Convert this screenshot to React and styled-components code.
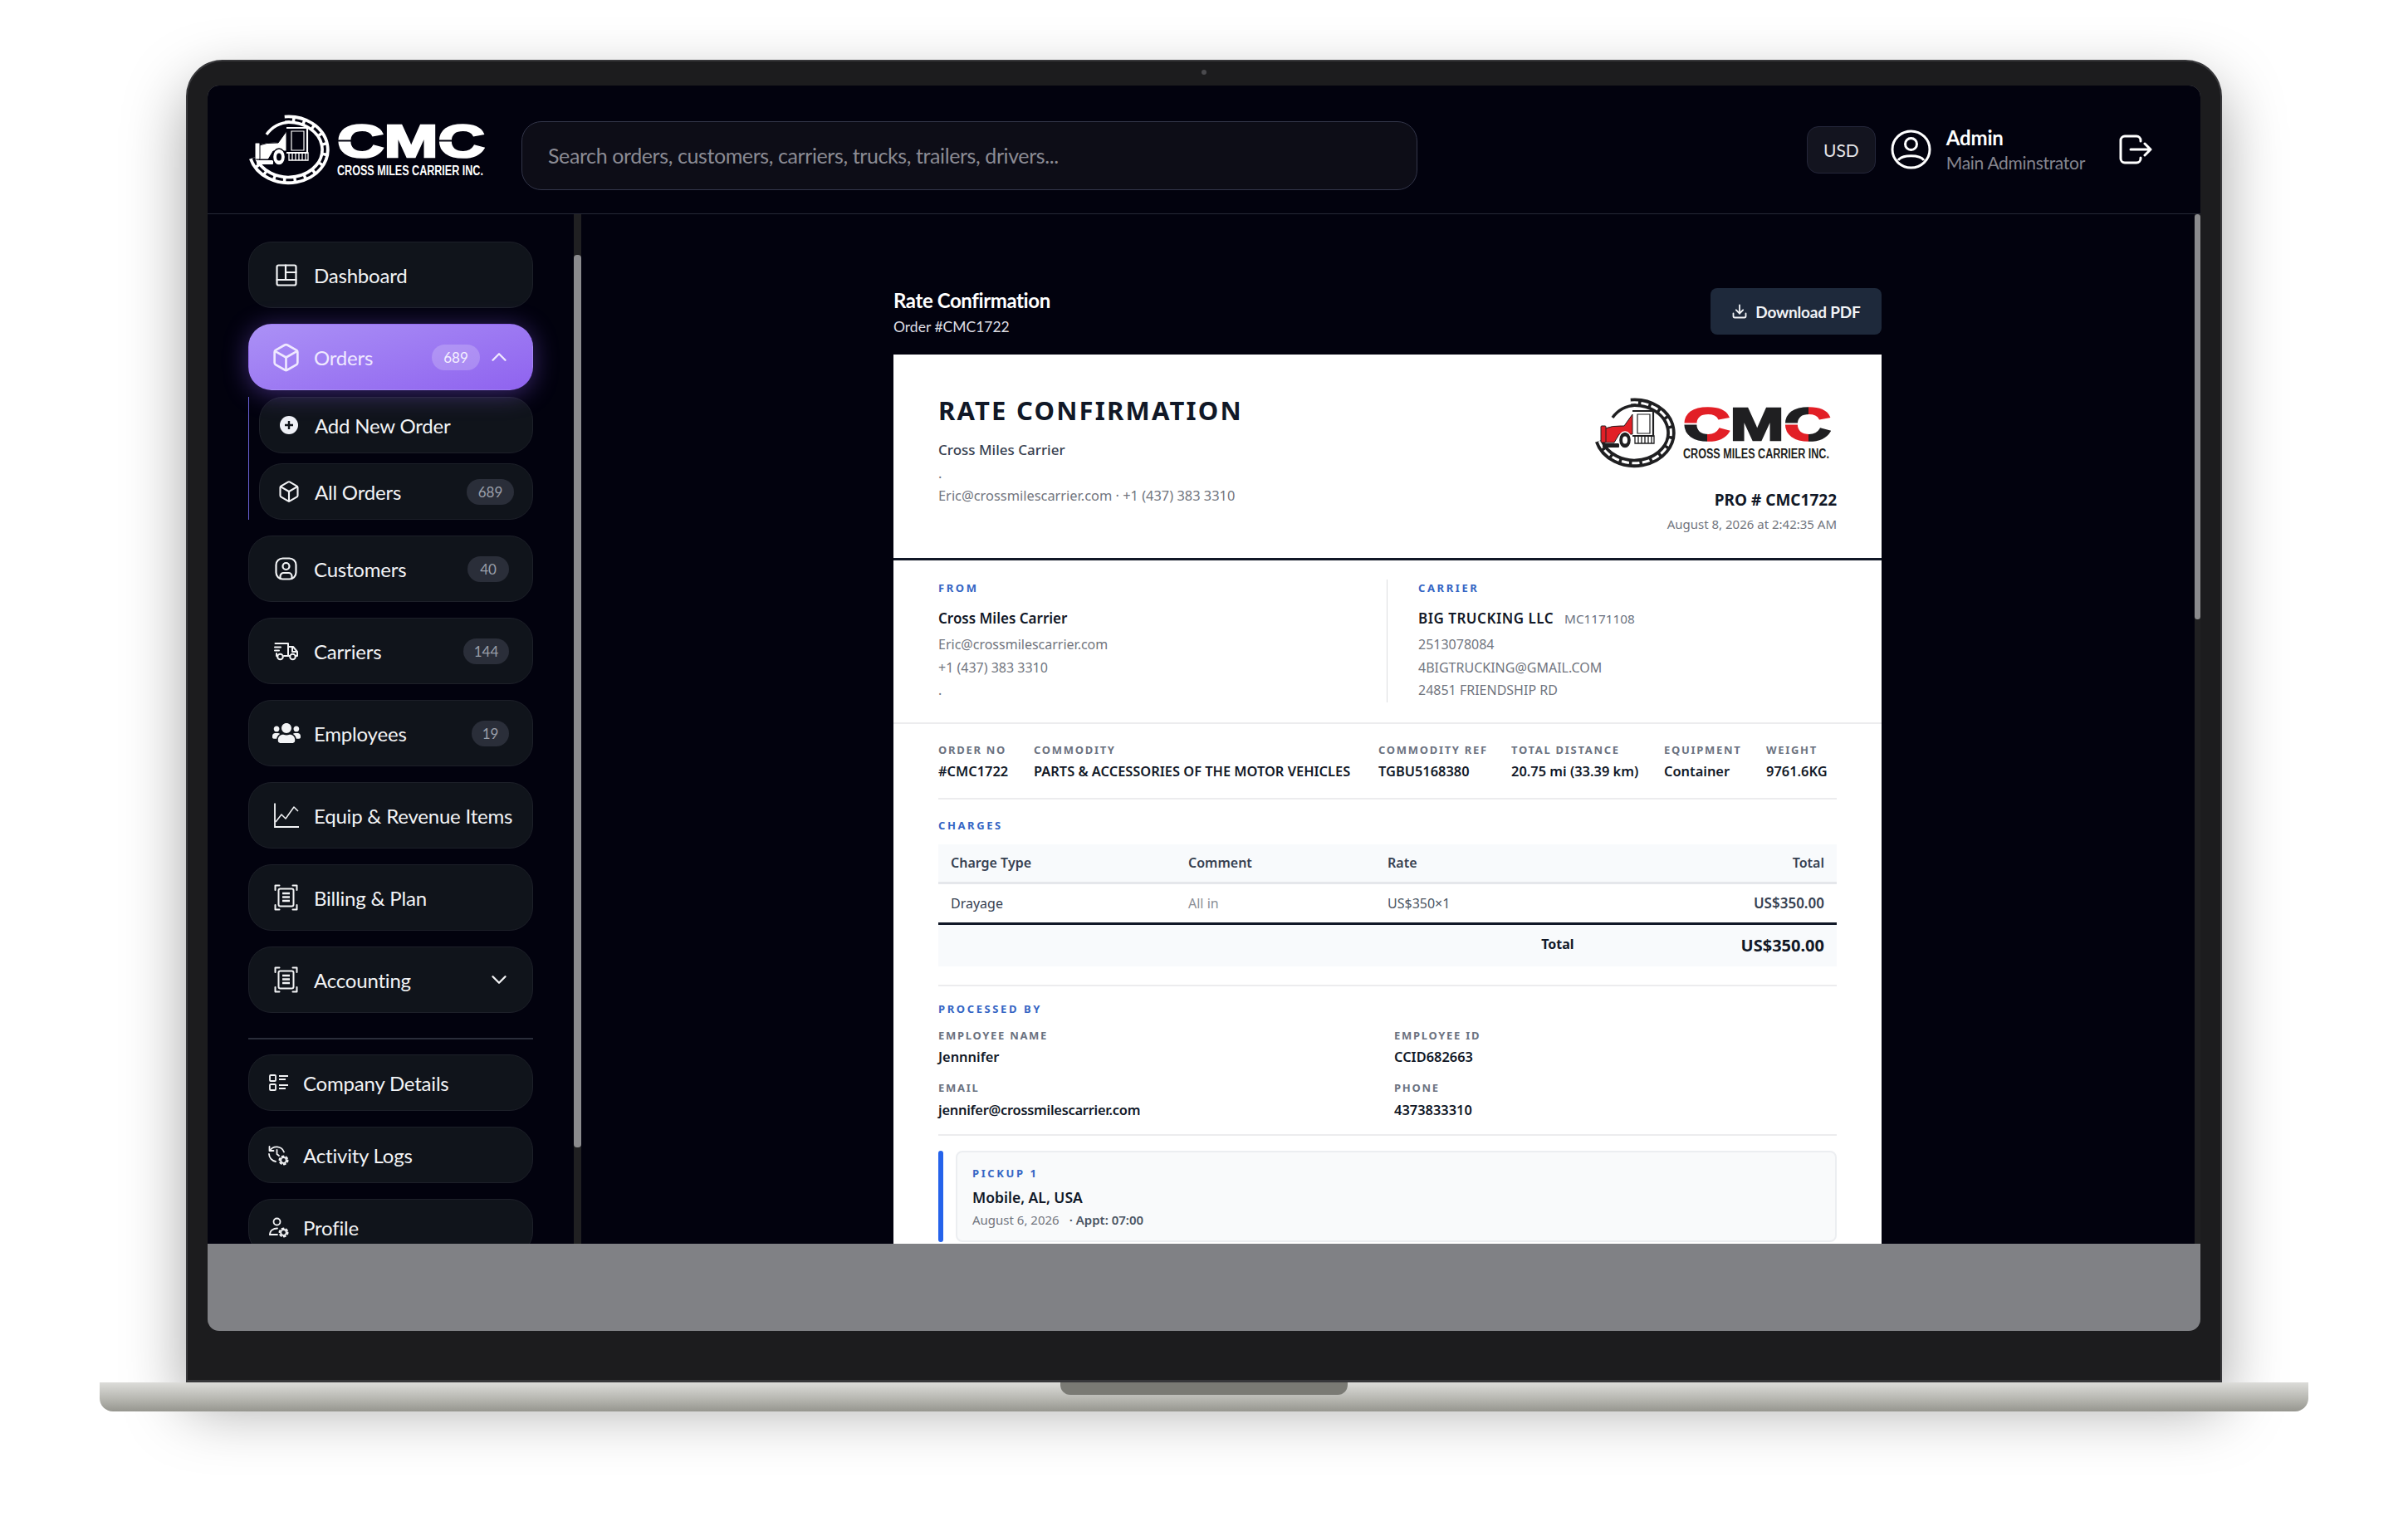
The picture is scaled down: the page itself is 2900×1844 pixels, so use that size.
import styled, { createGlobalStyle } from "styled-components"
import { Box, ChevronDown, ChevronUp, Download } from "lucide-react"
import { FaUsers } from "react-icons/fa"

const uiFont = `"Lato", "Noto Sans", sans-serif`
const docFont = `"Noto Sans", "Open Sans", sans-serif`

const colors = {
  ink: "#111827",
  muted: "#71757e",
  label: "#6b7280",
  blue: "#3565c4",
  rule: "#ececee",
  appBg: "#02020e",
  navBg: "#10141b",
  navBorder: "#1d2029",
}

const GlobalStyle = createGlobalStyle`
  html, body { margin: 0; background: #ffffff; }
  * { box-sizing: border-box; }
`

const Page = styled.div`
  width: 2900px;
  height: 1844px;
  padding-top: 72px;
  display: flex;
  flex-direction: column;
  align-items: center;
  overflow: hidden;
  background: #ffffff;
  font-family: ${uiFont};
`
const Lid = styled.div`
  position: relative;
  width: 2452px;
  height: 1593px;
  padding: 29px 26px 60px;
  border-radius: 44px 44px 0 0;
  background: #1c1c1e;
  border: 2px solid #37373a;
  border-bottom-width: 3px;
  box-shadow: 0 30px 75px rgba(0, 0, 0, 0.36);
`
const Camera = styled.span`
  position: absolute;
  top: 10px;
  left: 50%;
  width: 6px;
  height: 6px;
  margin-left: -3px;
  border-radius: 50%;
  background: #4a4a4e;
`
const Screen = styled.div`
  height: 1500px;
  margin: 0 -2px;
  border-radius: 14px;
  overflow: hidden;
  background: #808185;
`
const Shell = styled.div`
  height: 1395px;
  display: flex;
  flex-direction: column;
  background: ${colors.appBg};
`
const LaptopBase = styled.div`
  position: relative;
  width: 2660px;
  height: 35px;
  border-radius: 0 0 16px 16px;
  background: linear-gradient(#dcdcd9, #b8b8b2 55%, #96968f);
  box-shadow: 0 56px 50px -30px rgba(0, 0, 0, 0.34);
`
const BaseNotch = styled.span`
  position: absolute;
  top: 0;
  left: 50%;
  width: 346px;
  height: 15px;
  margin-left: -173px;
  border-radius: 0 0 12px 12px;
  background: #7a7a74;
`

/* top bar */
const TopBar = styled.header`
  height: 155px;
  flex-shrink: 0;
  display: flex;
  align-items: center;
  padding: 0 58px 0 49px;
  border-bottom: 1px solid #252836;
`
const SearchBox = styled.div`
  width: 1079px;
  height: 83px;
  margin: 14px 0 0 43px;
  padding-left: 31px;
  display: flex;
  align-items: center;
  border-radius: 24px;
  border: 1px solid #33364a;
  background: #0d0d17;
  color: #8b8b94;
  font-size: 25px;
  letter-spacing: -0.4px;
`
const TopActions = styled.div`
  margin-left: auto;
  display: flex;
  align-items: center;
`
const CurrencyButton = styled.div`
  width: 83px;
  height: 57px;
  display: flex;
  align-items: center;
  justify-content: center;
  border-radius: 14px;
  border: 1px solid #24263a;
  background: #13141f;
  color: #e4e4e8;
  font-size: 21px;
`
const AdminBlock = styled.div`
  margin-left: 18px;
  display: flex;
  align-items: center;
  gap: 18px;
  color: #ffffff;
`
const AdminText = styled.div`
  display: flex;
  flex-direction: column;
  gap: 3px;
`
const AdminName = styled.span`
  font-size: 24px;
  line-height: 27px;
  font-weight: 700;
  letter-spacing: -0.2px;
`
const AdminRole = styled.span`
  font-size: 21px;
  line-height: 27px;
  letter-spacing: -0.3px;
  color: #85858e;
`
const LogoutIcon = styled.svg`
  margin-left: 41px;
  display: block;
`

/* body */
const Body = styled.div`
  flex: 1;
  min-height: 0;
  display: flex;
  overflow: hidden;
`
const Sidebar = styled.nav`
  width: 441px;
  flex-shrink: 0;
  padding: 33px 49px 0;
  display: flex;
  flex-direction: column;
  gap: 19px;
  overflow: hidden;
`
const ScrollTrack = styled.div`
  width: ${({ $width }) => $width}px;
  flex-shrink: 0;
  background: #202022;
`
const ScrollThumb = styled.div`
  width: 100%;
  height: ${({ $height }) => $height}px;
  margin-top: ${({ $top }) => $top}px;
  border-radius: 4px;
  background: #8b8b8e;
`
const NavItem = styled.div`
  position: relative;
  flex-shrink: 0;
  display: flex;
  align-items: center;
  height: ${({ $size }) => ($size ? 68 : 80)}px;
  padding: 0 ${({ $size }) => ($size === "sub" ? 22 : 28)}px 0 ${({ $size }) => ($size ? 23 : 31)}px;
  gap: ${({ $size }) => ($size === "small" ? 18 : $size === "sub" ? 19 : 20)}px;
  border-radius: 28px;
  border: 1px solid ${({ $active }) => ($active ? "transparent" : colors.navBorder)};
  background: ${({ $active }) =>
    $active ? "linear-gradient(165deg, #ab91f6, #8f63ef)" : colors.navBg};
  box-shadow: ${({ $active }) => ($active ? "0 4px 30px rgba(139, 92, 246, 0.42)" : "none")};
  color: ${({ $active }) => ($active ? "#efe9ff" : "#f2f3f5")};
  z-index: ${({ $active }) => ($active ? 1 : 0)};
`
const IconSlot = styled.span`
  width: ${({ $width }) => $width || 27}px;
  flex-shrink: 0;
  display: flex;
  justify-content: center;
  align-items: center;
  & > svg { flex-shrink: 0; display: block; }
`
const NavLabel = styled.span`
  flex: 1;
  font-size: 24px;
  letter-spacing: -0.2px;
  white-space: nowrap;
`
const CountBadge = styled.span`
  min-width: ${({ $width }) => $width}px;
  height: 31px;
  display: flex;
  align-items: center;
  justify-content: center;
  border-radius: 16px;
  font-size: 17px;
  background: ${({ $active }) => ($active ? "rgba(255, 255, 255, 0.2)" : "#2a2e39")};
  color: ${({ $active }) => ($active ? "#f4efff" : "#9a9fa9")};
`
const ChevronSlot = styled.span`
  width: 18px;
  margin: 0 3px 0 -6px;
  display: flex;
  justify-content: center;
  & > svg { flex-shrink: 0; display: block; }
`
const OrdersGroup = styled.div`
  display: flex;
  flex-direction: column;
  gap: 8px;
`
const SubNav = styled.div`
  display: flex;
  flex-direction: column;
  gap: 12px;
  padding-left: 12px;
  border-left: 1.5px solid #6b62d8;
`
const NavDivider = styled.div`
  flex-shrink: 0;
  height: 2px;
  margin: 11px 0 -1px;
  background: #2a2d3a;
`

/* main panel */
const Main = styled.main`
  flex: 1;
  min-width: 0;
  padding: 89px 1px 0 0;
  overflow: hidden;
`
const Column = styled.div`
  width: 1190px;
  margin: 0 auto;
`
const PageHead = styled.div`
  height: 80px;
  display: flex;
  justify-content: space-between;
  align-items: flex-start;
`
const PageTitles = styled.div`
  display: flex;
  flex-direction: column;
`
const PageTitle = styled.h1`
  margin: 0;
  font-size: 24px;
  line-height: 30px;
  font-weight: 700;
  letter-spacing: -0.4px;
  color: #ffffff;
`
const PageSub = styled.span`
  margin-top: 5px;
  font-size: 17.5px;
  line-height: 24px;
  color: #dddde2;
`
const DownloadButton = styled.div`
  width: 206px;
  height: 56px;
  display: flex;
  align-items: center;
  justify-content: center;
  gap: 9px;
  border-radius: 8px;
  background: #1e293b;
  color: #f1f3f6;
  font-size: 19px;
  font-weight: 700;
  letter-spacing: -0.2px;
`

/* the document */
const Paper = styled.article`
  padding-bottom: 40px;
  background: #ffffff;
  font-family: ${docFont};
  color: ${colors.ink};
`
const DocHeader = styled.section`
  height: 248px;
  padding: 0 54px;
  display: flex;
  justify-content: space-between;
  border-bottom: 3px solid ${colors.ink};
`
const DocHeadLeft = styled.div`
  padding-top: 47px;
`
const DocTitle = styled.h2`
  margin: 0;
  font-size: 31px;
  line-height: 40px;
  font-weight: 700;
  letter-spacing: 2.2px;
`
const DocCompany = styled.div`
  margin-top: 16px;
  font-size: 17px;
  line-height: 24px;
  font-weight: 500;
  color: #374151;
`
const DocContact = styled.div`
  margin-top: 2px;
  font-size: 16.4px;
  line-height: 27px;
  color: ${colors.muted};
`
const DocHeadRight = styled.div`
  padding-top: 52px;
  display: flex;
  flex-direction: column;
  align-items: flex-end;
`
const LogoFrame = styled.div`
  margin-right: 6px;
`
const ProNumber = styled.div`
  margin-top: 25px;
  font-size: 19px;
  line-height: 26px;
  font-weight: 700;
`
const ProDate = styled.div`
  margin-top: 4px;
  font-size: 15px;
  line-height: 24px;
  color: ${colors.muted};
`
const Parties = styled.section`
  padding: 23px 54px 24px;
  display: grid;
  grid-template-columns: 540px 1fr;
  border-bottom: 2px solid ${colors.rule};
`
const PartyCol = styled.div`
  ${({ $divided }) => ($divided ? "padding-left: 37px; border-left: 1.5px solid #dcdde0;" : "")}
`
const SectionLabel = styled.div`
  font-size: 13px;
  line-height: 20px;
  font-weight: 700;
  letter-spacing: 2.6px;
  color: ${colors.blue};
`
const PartyName = styled.div`
  margin: 14px 0 5px;
  font-size: 17px;
  line-height: 26px;
  font-weight: 600;
  letter-spacing: ${({ $caps }) => ($caps ? "0.5px" : "0")};
  display: flex;
  align-items: baseline;
  gap: 13px;
`
const PartyCode = styled.span`
  font-size: 15.3px;
  font-weight: 400;
  letter-spacing: 0;
  color: ${colors.label};
`
const PartyLine = styled.div`
  font-size: 16px;
  line-height: 27.5px;
  color: ${colors.muted};
`
const Sheet = styled.div`
  padding: 0 54px;
`
const SpecRow = styled.div`
  padding: 22px 0 20px;
  display: grid;
  grid-template-columns: 115px 415px 160px 184px 123px 1fr;
  border-bottom: 2px solid ${colors.rule};
`
const FieldLabel = styled.div`
  font-size: 13px;
  line-height: 18px;
  font-weight: 700;
  letter-spacing: 1.7px;
  white-space: nowrap;
  color: ${colors.label};
`
const FieldValue = styled.div`
  margin-top: ${({ $gap }) => $gap || 5}px;
  font-size: 16.4px;
  line-height: 24px;
  font-weight: 600;
  letter-spacing: ${({ $tight }) => ($tight ? "-0.25px" : "0")};
  white-space: nowrap;
`
const ChargesBlock = styled.div`
  padding-top: 21px;
`
const ChargeTable = styled.div`
  margin-top: 13px;
`
const ChargeRow = styled.div`
  display: grid;
  grid-template-columns: 286px 240px 1fr auto;
  align-items: center;
  padding: 0 15px;
  height: ${({ $head }) => ($head ? 48 : 49)}px;
  background: ${({ $head }) => ($head ? "#f8fafc" : "#ffffff")};
  border-bottom: 3px solid ${({ $head }) => ($head ? "#e5e7eb" : colors.ink)};
  font-size: 16px;
`
const HeadCell = styled.span`
  font-weight: 600;
  color: #374151;
  text-align: ${({ $right }) => ($right ? "right" : "left")};
`
const BodyCell = styled.span`
  font-size: ${({ $strong }) => ($strong ? 17 : 16)}px;
  font-weight: ${({ $strong }) => ($strong ? 600 : 400)};
  color: ${({ $tone }) => $tone || "#374151"};
`
const TotalRow = styled.div`
  height: 50px;
  padding: 0 15px;
  display: flex;
  justify-content: flex-end;
  align-items: center;
  gap: 201px;
  background: #f8fafc;
`
const TotalLabel = styled.span`
  margin-bottom: 4px;
  font-size: 16px;
  font-weight: 700;
`
const TotalValue = styled.span`
  font-size: 20px;
  font-weight: 700;
`
const ProcessedBlock = styled.div`
  margin-top: 22px;
  padding: 17px 0 17px;
  border-top: 2px solid ${colors.rule};
  border-bottom: 2px solid ${colors.rule};
`
const PeopleGrid = styled.div`
  margin-top: 13px;
  display: grid;
  grid-template-columns: 549px 1fr;
  row-gap: 16px;
`
const StopRow = styled.div`
  margin-top: 18px;
  display: flex;
  gap: 15px;
`
const StopBar = styled.span`
  width: 6px;
  height: 110px;
  border-radius: 3px;
  background: #2563eb;
`
const StopCard = styled.div`
  flex: 1;
  height: 110px;
  padding: 16px 18px 0;
  border-radius: 8px;
  border: 2px solid #eceef1;
  background: #f9fafb;
`
const StopLabel = styled(SectionLabel)`
  line-height: 18px;
`
const StopCity = styled.div`
  margin-top: 7px;
  font-size: 17.5px;
  line-height: 26px;
  font-weight: 600;
`
const StopMeta = styled.div`
  margin-top: 2px;
  font-size: 15px;
  line-height: 24px;
  color: ${colors.muted};
  display: flex;
  gap: 12px;
`
const StopAppt = styled.span`
  font-weight: 600;
  color: #4b5563;
`

/* drawn icons */
const strokeProps = {
  fill: "none",
  stroke: "currentColor",
  strokeLinecap: "round",
  strokeLinejoin: "round",
}

function DashboardIcon() {
  return (
    <svg width="26" height="27" viewBox="0 0 26 27" {...strokeProps} strokeWidth="2.2">
      <rect x="1.5" y="1.5" width="23" height="24" rx="2" />
      <path d="M12 1.5V19M1.5 19H24.5M12 10H24.5" />
    </svg>
  )
}
function CustomersIcon() {
  return (
    <svg width="27" height="28" viewBox="0 0 27 28" {...strokeProps} strokeWidth="2.2">
      <rect x="1.5" y="1.5" width="24" height="25" rx="8" />
      <circle cx="13.5" cy="11" r="4" />
      <path d="M6.5 25V23a4 4 0 0 1 4-4h6a4 4 0 0 1 4 4v2" />
    </svg>
  )
}
function TruckIcon() {
  return (
    <svg width="29" height="23" viewBox="0 0 29 23" {...strokeProps} strokeWidth="2">
      <path d="M1.5 2H17V17H12M4 17H3V14" />
      <path d="M1 6.5H8M1 10.5H6" />
      <path d="M17 6H23L28 12V17H26M19 17H17M22 6V12H28" />
      <circle cx="7.5" cy="18" r="3.3" />
      <circle cx="22.5" cy="18" r="3.3" />
    </svg>
  )
}
function ChartIcon() {
  return (
    <svg width="30" height="30" viewBox="0 0 30 30" fill="none" stroke="currentColor" strokeWidth="1.5">
      <path d="M1 0.5V29H30" strokeWidth="1.8" />
      <path d="M2 23L9 14L14 19L24 5L29 10" strokeLinejoin="round" />
    </svg>
  )
}
function ScanDocIcon() {
  return (
    <svg width="29" height="32" viewBox="0 0 29 32" {...strokeProps} strokeWidth="2">
      <path d="M1.5 7V1.5H6.5M22.5 1.5H27.5V7M1.5 25V30.5H6.5M27.5 25V30.5H22.5" />
      <rect x="5.5" y="5.5" width="18" height="21" rx="2" />
      <path d="M10 11H19M10 15.5H19M10 20H19" strokeWidth="2.4" strokeLinecap="butt" />
    </svg>
  )
}
function PlusCircleIcon() {
  return (
    <svg width="22" height="22" viewBox="0 0 22 22">
      <circle cx="11" cy="11" r="11" fill="#eef0f6" />
      <path d="M11 6V16M6 11H16" stroke="#10141b" strokeWidth="2.4" />
    </svg>
  )
}
function DetailsIcon() {
  return (
    <svg width="23" height="20" viewBox="0 0 23 20" {...strokeProps} strokeWidth="1.8" strokeLinecap="butt">
      <rect x="1" y="1" width="7" height="7" rx="1" />
      <rect x="1" y="12" width="7" height="7" rx="1" />
      <path d="M12 2H23M12 6H20M12 13H23M12 17H20" />
    </svg>
  )
}
function Gear({ x, y }) {
  return (
    <g>
      <circle cx={x} cy={y} r="3.4" fill="none" stroke="currentColor" strokeWidth="2" />
      <circle cx={x} cy={y} r="5" fill="none" stroke="currentColor" strokeWidth="2" strokeDasharray="2 3.24" />
    </g>
  )
}
function LogsIcon() {
  return (
    <svg width="25" height="25" viewBox="0 0 25 25" {...strokeProps} strokeWidth="1.8">
      <path d="M1.5 2V7H6.5" />
      <path d="M2 7A9.5 9.5 0 0 1 19 8.5" />
      <path d="M1 11A9.5 9.5 0 0 0 9 20" />
      <path d="M10.5 6V11L13 13" />
      <Gear x={18.5} y={18.5} />
    </svg>
  )
}
function ProfileIcon() {
  return (
    <svg width="25" height="25" viewBox="0 0 25 25" {...strokeProps} strokeWidth="1.8">
      <circle cx="10.5" cy="5.5" r="4" />
      <path d="M2 21C2 16 6 13.5 11 13.5" />
      <path d="M2 21H11" />
      <Gear x={18.5} y={18.5} />
    </svg>
  )
}
function AvatarIcon() {
  return (
    <svg width="49" height="48" viewBox="0 0 49 48" fill="none" stroke="#ffffff" strokeWidth="3">
      <ellipse cx="24.5" cy="24" rx="22.5" ry="22" />
      <circle cx="24.5" cy="17.5" r="7" />
      <path d="M9 37C14 30 35 30 40 37" />
    </svg>
  )
}

function Logo({ mono, uid }) {
  const main = mono ? "#ffffff" : "#1f1f21"
  const accent = mono ? "#ffffff" : "#e21f26"
  const ground = mono ? colors.appBg : "#ffffff"
  const letterFont = `"Liberation Sans", sans-serif`
  const paint = `url(#${uid}-paint)`
  return (
    <svg width="286" height="85" viewBox="0 0 286 85" style={{ display: "block", flexShrink: 0 }}>
      <defs>
        {/* two-tone fill of the wordmark */}
        <pattern id={`${uid}-paint`} patternUnits="userSpaceOnUse" width="300" height="85">
          <rect width="300" height="85" fill={main} />
          <rect x="100" y="0" width="65" height="31" fill={accent} />
          <rect x="136" y="32" width="30" height="30" fill={accent} />
          <rect x="258" y="0" width="42" height="31" fill={accent} />
          <rect x="229" y="32" width="29" height="30" fill={accent} />
        </pattern>
      </defs>
      {/* emblem: road ring */}
      <path d="M44 6A44 36.5 0 1 1 6 52" fill="none" stroke={main} strokeWidth="10.5" />
      <path d="M44 6A44 36.5 0 1 1 6 52" fill="none" stroke={ground} strokeWidth="3" strokeDasharray="9 3.5" />
      <path d="M22 24Q32 10 50 9" fill="none" stroke={main} strokeWidth="3.5" />
      {/* emblem: truck */}
      <path d="M46 16H71V46H46" fill="none" stroke={main} strokeWidth="2.2" />
      <path d="M52 20H67V43H52Z" fill="none" stroke={main} strokeWidth="1.2" />
      <path d="M10 38Q22 33 36 34L46 20V44H30L24 54H10Z" fill={accent} stroke={mono ? ground : main} strokeWidth="1" />
      <rect x="8" y="34" width="6" height="20" rx="1" fill={accent} stroke={mono ? ground : main} strokeWidth="1" />
      <rect x="10" y="55" width="20" height="5" rx="1" fill={main} />
      <ellipse cx="37" cy="51" rx="7.5" ry="10" fill={main} stroke={ground} strokeWidth="1.4" />
      <ellipse cx="37" cy="51" rx="3" ry="4.5" fill={ground} />
      <path d="M49 46H72V55H49ZM53 46V55M57 46V55M61 46V55M65 46V55M69 46V55" fill="none" stroke={main} strokeWidth="1.3" />
      {/* wordmark */}
      <text x="107" y="51" fontFamily={letterFont} fontWeight="700" fontSize="56" textLength="178" lengthAdjust="spacingAndGlyphs" strokeWidth="2.6" fill={paint} stroke={paint}>
        CMC
      </text>
      <path d="M104 31.5H166M228 31.5H288" stroke={ground} strokeWidth="1.8" />
      <text transform="translate(107 73) scale(0.74 1)" fontFamily={letterFont} fontWeight="700" fontSize="17" fill={main}>
        CROSS MILES CARRIER INC.
      </text>
    </svg>
  )
}

export default function App() {
  return (
    <Page>
      <GlobalStyle />
      <Lid>
        <Camera />
        <Screen>
          <Shell>
            <TopBar>
              <Logo mono uid="head" />
              <SearchBox>Search orders, customers, carriers, trucks, trailers, drivers...</SearchBox>
              <TopActions>
                <CurrencyButton>USD</CurrencyButton>
                <AdminBlock>
                  <AvatarIcon />
                  <AdminText>
                    <AdminName>Admin</AdminName>
                    <AdminRole>Main Adminstrator</AdminRole>
                  </AdminText>
                </AdminBlock>
                <LogoutIcon width="40" height="36" viewBox="0 0 40 36" fill="none" stroke="#ffffff" strokeWidth="3" strokeLinecap="round" strokeLinejoin="round">
                  <path d="M26 8V7A5 5 0 0 0 21 2H7A5 5 0 0 0 2 7V29A5 5 0 0 0 7 34H21A5 5 0 0 0 26 29V28" />
                  <path d="M14 18H38M31 11L38 18L31 25" />
                </LogoutIcon>
              </TopActions>
            </TopBar>
            <Body>
              <Sidebar>
                <NavItem>
                  <IconSlot><DashboardIcon /></IconSlot>
                  <NavLabel>Dashboard</NavLabel>
                </NavItem>
                <OrdersGroup>
                  <NavItem $active>
                    <IconSlot><Box size={37} strokeWidth={1.7} /></IconSlot>
                    <NavLabel>Orders</NavLabel>
                    <CountBadge $active $width={58}>689</CountBadge>
                    <ChevronSlot><ChevronUp size={30} strokeWidth={1.9} /></ChevronSlot>
                  </NavItem>
                  <SubNav>
                    <NavItem $size="sub">
                      <IconSlot $width={24}><PlusCircleIcon /></IconSlot>
                      <NavLabel>Add New Order</NavLabel>
                    </NavItem>
                    <NavItem $size="sub">
                      <IconSlot $width={24}><Box size={28} strokeWidth={1.8} /></IconSlot>
                      <NavLabel>All Orders</NavLabel>
                      <CountBadge $width={57}>689</CountBadge>
                    </NavItem>
                  </SubNav>
                </OrdersGroup>
                <NavItem>
                  <IconSlot><CustomersIcon /></IconSlot>
                  <NavLabel>Customers</NavLabel>
                  <CountBadge $width={50}>40</CountBadge>
                </NavItem>
                <NavItem>
                  <IconSlot><TruckIcon /></IconSlot>
                  <NavLabel>Carriers</NavLabel>
                  <CountBadge $width={55}>144</CountBadge>
                </NavItem>
                <NavItem>
                  <IconSlot><FaUsers size={34} /></IconSlot>
                  <NavLabel>Employees</NavLabel>
                  <CountBadge $width={45}>19</CountBadge>
                </NavItem>
                <NavItem>
                  <IconSlot><ChartIcon /></IconSlot>
                  <NavLabel>Equip &amp; Revenue Items</NavLabel>
                </NavItem>
                <NavItem>
                  <IconSlot><ScanDocIcon /></IconSlot>
                  <NavLabel>Billing &amp; Plan</NavLabel>
                </NavItem>
                <NavItem>
                  <IconSlot><ScanDocIcon /></IconSlot>
                  <NavLabel>Accounting</NavLabel>
                  <ChevronSlot><ChevronDown size={30} strokeWidth={1.9} /></ChevronSlot>
                </NavItem>
                <NavDivider />
                <NavItem $size="small">
                  <IconSlot $width={24}><DetailsIcon /></IconSlot>
                  <NavLabel>Company Details</NavLabel>
                </NavItem>
                <NavItem $size="small">
                  <IconSlot $width={24}><LogsIcon /></IconSlot>
                  <NavLabel>Activity Logs</NavLabel>
                </NavItem>
                <NavItem $size="small">
                  <IconSlot $width={24}><ProfileIcon /></IconSlot>
                  <NavLabel>Profile</NavLabel>
                </NavItem>
              </Sidebar>
              <ScrollTrack $width={9}>
                <ScrollThumb $top={49} $height={1075} />
              </ScrollTrack>
              <Main>
                <Column>
                  <PageHead>
                    <PageTitles>
                      <PageTitle>Rate Confirmation</PageTitle>
                      <PageSub>Order #CMC1722</PageSub>
                    </PageTitles>
                    <DownloadButton>
                      <Download size={20} strokeWidth={2.2} />
                      Download PDF
                    </DownloadButton>
                  </PageHead>
                  <Paper>
                    <DocHeader>
                      <DocHeadLeft>
                        <DocTitle>RATE CONFIRMATION</DocTitle>
                        <DocCompany>Cross Miles Carrier</DocCompany>
                        <DocContact>
                          .<br />
                          Eric@crossmilescarrier.com · +1 (437) 383 3310
                        </DocContact>
                      </DocHeadLeft>
                      <DocHeadRight>
                        <LogoFrame><Logo uid="doc" /></LogoFrame>
                        <ProNumber>PRO # CMC1722</ProNumber>
                        <ProDate>August 8, 2026 at 2:42:35 AM</ProDate>
                      </DocHeadRight>
                    </DocHeader>
                    <Parties>
                      <PartyCol>
                        <SectionLabel>FROM</SectionLabel>
                        <PartyName>Cross Miles Carrier</PartyName>
                        <PartyLine>Eric@crossmilescarrier.com</PartyLine>
                        <PartyLine>+1 (437) 383 3310</PartyLine>
                        <PartyLine>.</PartyLine>
                      </PartyCol>
                      <PartyCol $divided>
                        <SectionLabel>CARRIER</SectionLabel>
                        <PartyName $caps>
                          BIG TRUCKING LLC
                          <PartyCode>MC1171108</PartyCode>
                        </PartyName>
                        <PartyLine>2513078084</PartyLine>
                        <PartyLine>4BIGTRUCKING@GMAIL.COM</PartyLine>
                        <PartyLine>24851 FRIENDSHIP RD</PartyLine>
                      </PartyCol>
                    </Parties>
                    <Sheet>
                      <SpecRow>
                        <div><FieldLabel>ORDER NO</FieldLabel><FieldValue>#CMC1722</FieldValue></div>
                        <div><FieldLabel>COMMODITY</FieldLabel><FieldValue>PARTS &amp; ACCESSORIES OF THE MOTOR VEHICLES</FieldValue></div>
                        <div><FieldLabel>COMMODITY REF</FieldLabel><FieldValue>TGBU5168380</FieldValue></div>
                        <div><FieldLabel>TOTAL DISTANCE</FieldLabel><FieldValue>20.75 mi (33.39 km)</FieldValue></div>
                        <div><FieldLabel>EQUIPMENT</FieldLabel><FieldValue>Container</FieldValue></div>
                        <div><FieldLabel>WEIGHT</FieldLabel><FieldValue>9761.6KG</FieldValue></div>
                      </SpecRow>
                      <ChargesBlock>
                        <SectionLabel>CHARGES</SectionLabel>
                        <ChargeTable>
                          <ChargeRow $head>
                            <HeadCell>Charge Type</HeadCell>
                            <HeadCell>Comment</HeadCell>
                            <HeadCell>Rate</HeadCell>
                            <HeadCell $right>Total</HeadCell>
                          </ChargeRow>
                          <ChargeRow>
                            <BodyCell>Drayage</BodyCell>
                            <BodyCell $tone="#8a8e96">All in</BodyCell>
                            <BodyCell $tone="#4b5563">US$350×1</BodyCell>
                            <BodyCell $strong>US$350.00</BodyCell>
                          </ChargeRow>
                          <TotalRow>
                            <TotalLabel>Total</TotalLabel>
                            <TotalValue>US$350.00</TotalValue>
                          </TotalRow>
                        </ChargeTable>
                      </ChargesBlock>
                      <ProcessedBlock>
                        <SectionLabel>PROCESSED BY</SectionLabel>
                        <PeopleGrid>
                          <div><FieldLabel>EMPLOYEE NAME</FieldLabel><FieldValue>Jennnifer</FieldValue></div>
                          <div><FieldLabel>EMPLOYEE ID</FieldLabel><FieldValue>CCID682663</FieldValue></div>
                          <div><FieldLabel>EMAIL</FieldLabel><FieldValue $gap={6} $tight>jennifer@crossmilescarrier.com</FieldValue></div>
                          <div><FieldLabel>PHONE</FieldLabel><FieldValue $gap={6}>4373833310</FieldValue></div>
                        </PeopleGrid>
                      </ProcessedBlock>
                      <StopRow>
                        <StopBar />
                        <StopCard>
                          <StopLabel>PICKUP 1</StopLabel>
                          <StopCity>Mobile, AL, USA</StopCity>
                          <StopMeta>
                            August 6, 2026
                            <StopAppt>· Appt: 07:00</StopAppt>
                          </StopMeta>
                        </StopCard>
                      </StopRow>
                    </Sheet>
                  </Paper>
                </Column>
              </Main>
              <ScrollTrack $width={7}>
                <ScrollThumb $top={0} $height={488} />
              </ScrollTrack>
            </Body>
          </Shell>
        </Screen>
      </Lid>
      <LaptopBase>
        <BaseNotch />
      </LaptopBase>
    </Page>
  )
}
